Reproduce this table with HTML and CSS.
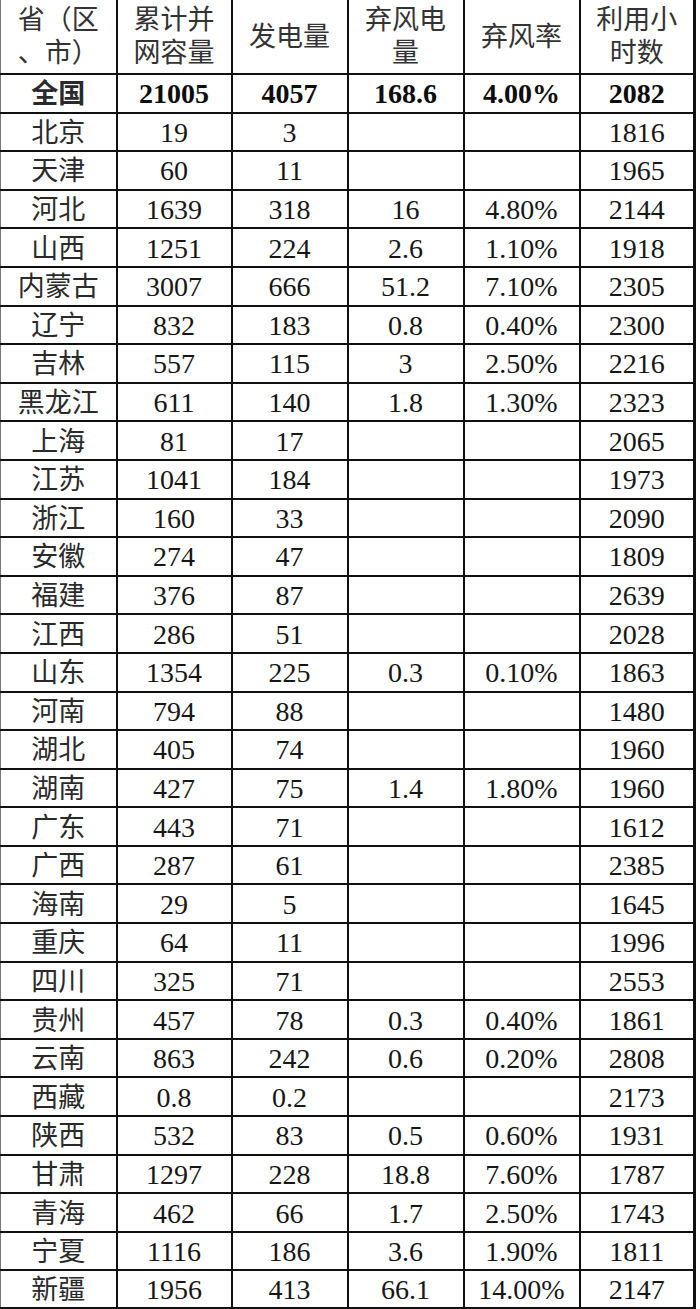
FILE: index.html
```html
<!DOCTYPE html>
<html lang="zh-CN">
<head>
<meta charset="utf-8">
<title>风电并网运行统计</title>
<link rel="stylesheet" href="styles.css">
</head>
<body>
<table class="grid">
  <colgroup>
    <col class="c1"><col class="c2"><col class="c3"><col class="c4"><col class="c5"><col class="c6">
  </colgroup>
  <thead>
    <tr class="head">
      <th>省（区<br>、市）</th>
      <th>累计并<br>网容量</th>
      <th>发电量</th>
      <th>弃风电<br>量</th>
      <th>弃风率</th>
      <th>利用小<br>时数</th>
    </tr>
  </thead>
  <tbody>
    <tr class="total"><td>全国</td><td>21005</td><td>4057</td><td>168.6</td><td>4.00%</td><td>2082</td></tr>
    <tr><td>北京</td><td>19</td><td>3</td><td></td><td></td><td>1816</td></tr>
    <tr><td>天津</td><td>60</td><td>11</td><td></td><td></td><td>1965</td></tr>
    <tr><td>河北</td><td>1639</td><td>318</td><td>16</td><td>4.80%</td><td>2144</td></tr>
    <tr><td>山西</td><td>1251</td><td>224</td><td>2.6</td><td>1.10%</td><td>1918</td></tr>
    <tr><td>内蒙古</td><td>3007</td><td>666</td><td>51.2</td><td>7.10%</td><td>2305</td></tr>
    <tr><td>辽宁</td><td>832</td><td>183</td><td>0.8</td><td>0.40%</td><td>2300</td></tr>
    <tr><td>吉林</td><td>557</td><td>115</td><td>3</td><td>2.50%</td><td>2216</td></tr>
    <tr><td>黑龙江</td><td>611</td><td>140</td><td>1.8</td><td>1.30%</td><td>2323</td></tr>
    <tr><td>上海</td><td>81</td><td>17</td><td></td><td></td><td>2065</td></tr>
    <tr><td>江苏</td><td>1041</td><td>184</td><td></td><td></td><td>1973</td></tr>
    <tr><td>浙江</td><td>160</td><td>33</td><td></td><td></td><td>2090</td></tr>
    <tr><td>安徽</td><td>274</td><td>47</td><td></td><td></td><td>1809</td></tr>
    <tr><td>福建</td><td>376</td><td>87</td><td></td><td></td><td>2639</td></tr>
    <tr><td>江西</td><td>286</td><td>51</td><td></td><td></td><td>2028</td></tr>
    <tr><td>山东</td><td>1354</td><td>225</td><td>0.3</td><td>0.10%</td><td>1863</td></tr>
    <tr><td>河南</td><td>794</td><td>88</td><td></td><td></td><td>1480</td></tr>
    <tr><td>湖北</td><td>405</td><td>74</td><td></td><td></td><td>1960</td></tr>
    <tr><td>湖南</td><td>427</td><td>75</td><td>1.4</td><td>1.80%</td><td>1960</td></tr>
    <tr><td>广东</td><td>443</td><td>71</td><td></td><td></td><td>1612</td></tr>
    <tr><td>广西</td><td>287</td><td>61</td><td></td><td></td><td>2385</td></tr>
    <tr><td>海南</td><td>29</td><td>5</td><td></td><td></td><td>1645</td></tr>
    <tr><td>重庆</td><td>64</td><td>11</td><td></td><td></td><td>1996</td></tr>
    <tr><td>四川</td><td>325</td><td>71</td><td></td><td></td><td>2553</td></tr>
    <tr><td>贵州</td><td>457</td><td>78</td><td>0.3</td><td>0.40%</td><td>1861</td></tr>
    <tr><td>云南</td><td>863</td><td>242</td><td>0.6</td><td>0.20%</td><td>2808</td></tr>
    <tr><td>西藏</td><td>0.8</td><td>0.2</td><td></td><td></td><td>2173</td></tr>
    <tr><td>陕西</td><td>532</td><td>83</td><td>0.5</td><td>0.60%</td><td>1931</td></tr>
    <tr><td>甘肃</td><td>1297</td><td>228</td><td>18.8</td><td>7.60%</td><td>1787</td></tr>
    <tr><td>青海</td><td>462</td><td>66</td><td>1.7</td><td>2.50%</td><td>1743</td></tr>
    <tr><td>宁夏</td><td>1116</td><td>186</td><td>3.6</td><td>1.90%</td><td>1811</td></tr>
    <tr><td>新疆</td><td>1956</td><td>413</td><td>66.1</td><td>14.00%</td><td>2147</td></tr>
  </tbody>
</table>
</body>
</html>
```

FILE: styles.css
```css
html, body {
  margin: 0;
  padding: 0;
  background: #ffffff;
}

.grid {
  border-collapse: collapse;
  table-layout: fixed;
  width: 696px;
  font-family: "Liberation Serif", "Noto Sans CJK SC", serif;
  font-size: 28px;
  color: #161616;
  border-right: 3px solid #111;
  border-bottom: 4px solid #111;
}

.c1 { width: 116px; }
.c2 { width: 115px; }
.c3 { width: 116px; }
.c4 { width: 116px; }
.c5 { width: 116px; }
.c6 { width: 115px; }

.grid th,
.grid td {
  border: 2px solid #111;
  padding: 0;
  text-align: center;
  vertical-align: middle;
  overflow: hidden;
  white-space: nowrap;
}

.grid th {
  font-weight: normal;
  font-size: 27px;
  line-height: 33px;
  color: #333333;
}

.head {
  height: 74px;
}

.head th {
  border-top: none;
  padding-top: 1px;
}

.grid tbody tr {
  height: 38.6px;
}

.grid td {
  line-height: 34px;
  padding-top: 2px;
}

.grid td:first-child {
  font-size: 27px;
  color: #2a2a2a;
}

.total td {
  font-weight: bold;
  color: #0d0d0d;
}

.grid th:first-child,
.grid td:first-child {
  border-left: 1px solid #777;
}
```
